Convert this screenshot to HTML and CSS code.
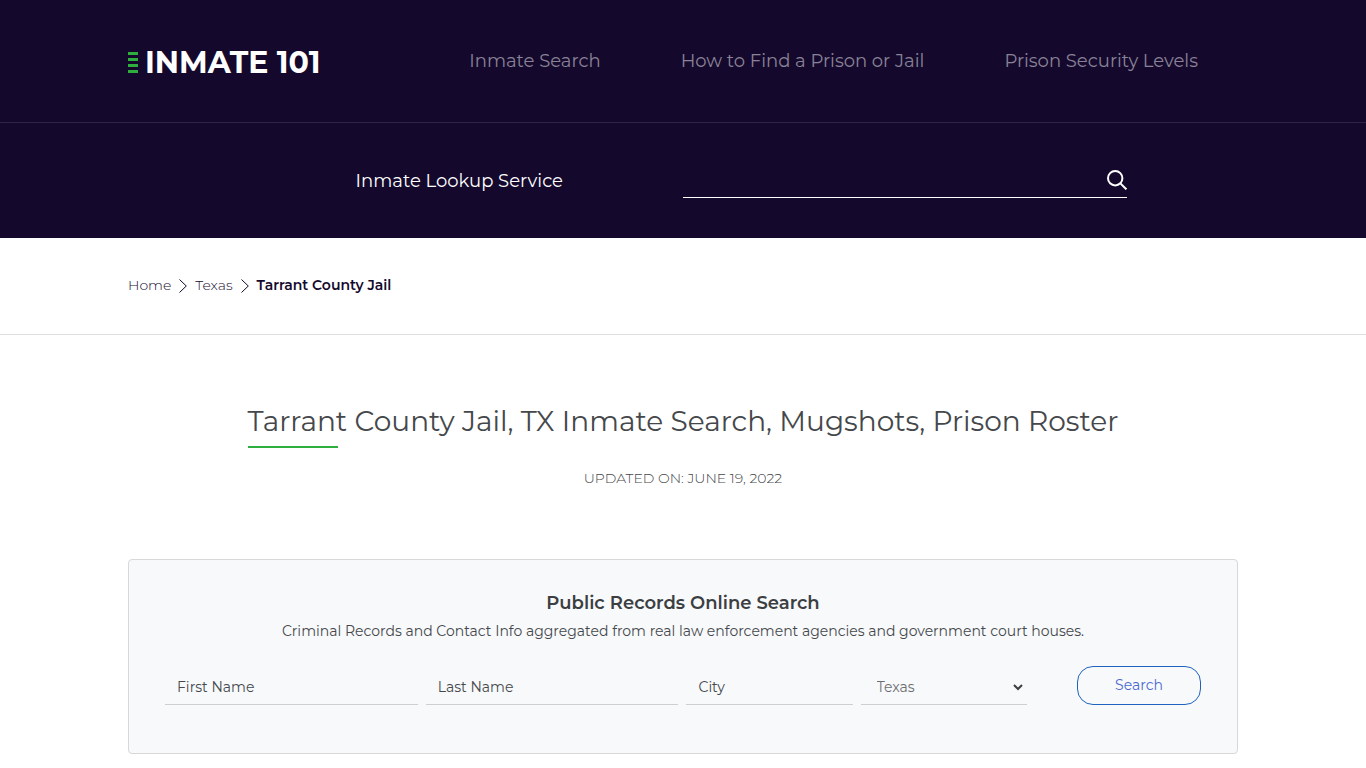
FILE: index.html
```html
<!DOCTYPE html>
<html lang="en">
<head>
    <meta charset="UTF-8">
    <meta name="viewport" content="width=device-width, initial-scale=1.0">
    <title>Tarrant County Jail, TX Inmate Search, Mugshots, Prison Roster</title>
    <link rel="stylesheet" href="styles.css">
</head>
<body>
    <header class="header">
        <div class="header-top">
            <div class="container header-row">
                <a class="logo" href="#">
                    <svg class="logo-bars" width="10" height="22" viewBox="0 0 10 22" fill="#2eae3c" aria-hidden="true">
                        <rect width="10" height="3"/>
                        <rect y="6" width="10" height="3"/>
                        <rect y="12" width="10" height="3"/>
                        <rect y="18" width="10" height="3"/>
                    </svg>
                    <span>INMATE 101</span>
                </a>
                <nav class="nav">
                    <a href="#">Inmate Search</a>
                    <a href="#">How to Find a Prison or Jail</a>
                    <a href="#">Prison Security Levels</a>
                </nav>
            </div>
        </div>
        <form class="container lookup">
            <label class="lookup-label" for="lookup">Inmate Lookup Service</label>
            <div class="lookup-field">
                <input type="text" id="lookup">
                <button type="submit" aria-label="Search">
                    <svg width="20" height="20" viewBox="0 0 20 20" fill="none" stroke="#fff" stroke-width="2" aria-hidden="true">
                        <circle cx="8.2" cy="8.2" r="7.2"/>
                        <path d="M13.4 13.4l6 6"/>
                    </svg>
                </button>
            </div>
        </form>
    </header>

    <div class="breadcrumb-bar">
        <nav class="container breadcrumb">
            <a href="#">Home</a>
            <svg width="8" height="14" viewBox="0 0 8 14" fill="none" stroke="#14092d" aria-hidden="true"><path d="M0.5 0.5L7.3 7L0.5 13.5"/></svg>
            <a href="#">Texas</a>
            <svg width="8" height="14" viewBox="0 0 8 14" fill="none" stroke="#14092d" aria-hidden="true"><path d="M0.5 0.5L7.3 7L0.5 13.5"/></svg>
            <strong>Tarrant County Jail</strong>
        </nav>
    </div>

    <main class="container main">
        <h1 class="title">Tarrant County Jail, TX Inmate Search, Mugshots, Prison Roster</h1>
        <p class="updated">UPDATED ON: JUNE 19, 2022</p>

        <section class="records">
            <h2>Public Records Online Search</h2>
            <p>Criminal Records and Contact Info aggregated from real law enforcement agencies and government court houses.</p>
            <form class="records-form">
                <div class="fields">
                    <input type="text" placeholder="First Name" aria-label="First Name">
                    <input type="text" placeholder="Last Name" aria-label="Last Name">
                    <input type="text" placeholder="City" aria-label="City">
                    <div class="select-wrap">
                        <select aria-label="State">
                            <option>Texas</option>
                        </select>
                        <svg class="select-arrow" width="10" height="7" viewBox="0 0 10 7" fill="none" stroke="#3c3f42" stroke-width="2" aria-hidden="true"><path d="M1 1l4 4l4-4"/></svg>
                    </div>
                </div>
                <button class="search-btn" type="submit">Search</button>
            </form>
        </section>
    </main>
</body>
</html>
```

FILE: styles.css
```css
* {
    box-sizing: border-box;
}

body {
    margin: 0;
    font-family: Montserrat, Inter, "Liberation Sans", sans-serif;
    font-size: 14px;
    font-weight: 400;
    line-height: 20px;
    color: #45484b;
    background-color: #fff;
}

a {
    color: inherit;
    text-decoration: none;
}

input, select, button {
    font: inherit;
    color: inherit;
    background: none;
    border: none;
    border-radius: 0;
    outline: none;
}

.container {
    width: 100%;
    max-width: 1140px;
    margin: 0 auto;
    padding: 0 15px;
}

/* header */
.header {
    background-color: #14092d;
    color: #fff;
    font-size: 18px;
}

.header-top {
    border-bottom: 1px solid #2f2546;
}

.header-row {
    display: flex;
    justify-content: space-between;
    align-items: center;
    padding-top: 44px;
    padding-bottom: 44px;
}

.logo {
    display: flex;
    align-items: center;
    gap: 7px;
    padding-top: 4px;
    font-size: 30px;
    font-weight: 700;
    line-height: 30px;
    white-space: nowrap;
}

.nav {
    display: flex;
    color: #8a8296;
    white-space: nowrap;
}

.nav a {
    padding: 0 40px;
}

.lookup {
    display: grid;
    grid-template-columns: 1fr 1fr;
    align-items: center;
    padding-top: 40px;
    padding-bottom: 40px;
}

.lookup-label {
    padding-right: 120px;
    text-align: right;
}

.lookup-field {
    display: flex;
    align-items: center;
    width: 80%;
    height: 35px;
    border-bottom: 1px solid #fff;
}

.lookup-field input {
    flex: 1;
    min-width: 0;
}

.lookup-field button {
    display: flex;
    padding: 0;
    cursor: pointer;
}

/* breadcrumb */
.breadcrumb-bar {
    border-bottom: 1px solid #dedede;
}

.breadcrumb {
    display: flex;
    align-items: center;
    gap: 8px;
    padding-top: 37px;
    padding-bottom: 39px;
    font-weight: 300;
    color: #14092d;
}

.breadcrumb svg {
    margin-top: 2px;
}

.breadcrumb strong {
    font-weight: 600;
}

/* content */
.main {
    padding-top: 66px;
    padding-bottom: 40px;
    text-align: center;
}

.title {
    width: fit-content;
    margin: 0 auto;
    font-size: 28px;
    font-weight: 400;
    line-height: 40px;
}

.title::after {
    content: "";
    display: block;
    width: 90px;
    height: 2px;
    margin-top: 5px;
    background-color: #2eae3c;
}

.updated {
    margin: 20px 0 71px;
    font-weight: 300;
}

.records {
    padding: 32px 36px 48px;
    background-color: #f8f9fb;
    border: 1px solid #d8d8d8;
    border-radius: 4px;
}

.records h2 {
    margin: 0 0 7px;
    font-size: 18px;
    font-weight: 600;
    line-height: 22px;
    color: #3c3f42;
}

.records p {
    margin: 0 0 25px;
}

.records-form {
    display: flex;
    gap: 50px;
}

.fields {
    flex: 1;
    display: grid;
    grid-template-columns: 38fr 38fr 25fr 25fr;
    gap: 8px;
}

.fields input, .fields select {
    width: 100%;
    min-width: 0;
    height: 39px;
    padding: 4px 12px 0;
    border-bottom: 1px solid #cfcfcf;
}

.fields input::placeholder {
    color: #45484b;
    opacity: 1;
}

.select-wrap {
    position: relative;
}

.fields select {
    padding-left: 16px;
    color: #6b6e71;
    appearance: none;
}

.select-arrow {
    position: absolute;
    top: 18px;
    right: 4px;
    pointer-events: none;
}

.search-btn {
    width: 124px;
    height: 39px;
    padding-bottom: 3px;
    border: 1px solid #1f62c0;
    border-radius: 16px;
    color: #4a69d0;
    cursor: pointer;
}
```
